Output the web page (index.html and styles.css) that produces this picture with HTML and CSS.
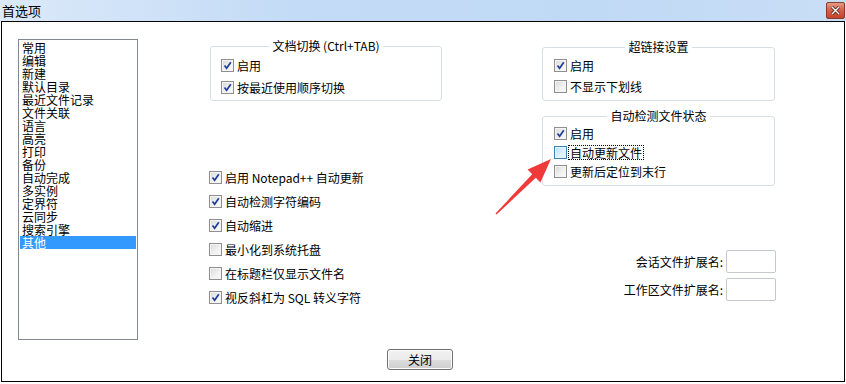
FILE: index.html
```
<!DOCTYPE html>
<html lang="zh-CN">
<head>
    <meta charset="UTF-8">
    <title>首选项</title>
    <link rel="stylesheet" href="styles.css">
</head>
<body>
    <div class="titlebar">
        <span class="title">首选项</span>
        <span class="close">
            <svg width="11" height="9" viewBox="0 0 11 9"><path d="M2 1 L9 8 M9 1 L2 8" stroke="#5a2016" stroke-width="3"/><path d="M2 1 L9 8 M9 1 L2 8" stroke="#fff" stroke-width="1.4"/></svg>
        </span>
    </div>
    <div class="window">
        <div class="panes">
            <ul class="list">
                <li>常用</li>
                <li>编辑</li>
                <li>新建</li>
                <li>默认目录</li>
                <li>最近文件记录</li>
                <li>文件关联</li>
                <li>语言</li>
                <li>高亮</li>
                <li>打印</li>
                <li>备份</li>
                <li>自动完成</li>
                <li>多实例</li>
                <li>定界符</li>
                <li>云同步</li>
                <li>搜索引擎</li>
                <li class="sel">其他</li>
            </ul>

            <div class="mid">
                <fieldset class="group g-doc">
                    <legend>文档切换 (Ctrl+TAB)</legend>
                    <label class="cbrow"><span class="cb on"></span>启用</label>
                    <label class="cbrow"><span class="cb on"></span>按最近使用顺序切换</label>
                </fieldset>
                <div class="opts">
                    <label class="cbrow"><span class="cb on"></span>启用 Notepad++ 自动更新</label>
                    <label class="cbrow"><span class="cb on"></span>自动检测字符编码</label>
                    <label class="cbrow"><span class="cb on"></span>自动缩进</label>
                    <label class="cbrow"><span class="cb"></span>最小化到系统托盘</label>
                    <label class="cbrow"><span class="cb"></span>在标题栏仅显示文件名</label>
                    <label class="cbrow"><span class="cb on"></span>视反斜杠为 SQL 转义字符</label>
                </div>
            </div>

            <div class="right">
                <fieldset class="group g-link">
                    <legend>超链接设置</legend>
                    <label class="cbrow"><span class="cb on"></span>启用</label>
                    <label class="cbrow"><span class="cb"></span>不显示下划线</label>
                </fieldset>
                <fieldset class="group g-watch">
                    <legend>自动检测文件状态</legend>
                    <label class="cbrow"><span class="cb on"></span>启用</label>
                    <label class="cbrow"><span class="cb hot"></span><span class="focus">自动更新文件</span></label>
                    <label class="cbrow"><span class="cb"></span>更新后定位到末行</label>
                </fieldset>
                <div class="exts">
                    <div class="ext"><span>会话文件扩展名:</span><span class="field"></span></div>
                    <div class="ext"><span>工作区文件扩展名:</span><span class="field"></span></div>
                </div>
            </div>
        </div>

        <div class="actions">
            <button class="btn">关闭</button>
        </div>

        <svg class="arrow" width="846" height="384" viewBox="0 0 846 384">
            <polygon points="495.5,213.5 532.2,174.2 527.6,169.6 551,159 540.4,182.4 535.8,177.8 496.5,214.5" fill="#f03a3a"/>
        </svg>
    </div>
</body>
</html>
```

FILE: styles.css
```
body {
    margin: 0;
    font-family: "Noto Sans CJK SC", "Liberation Sans", sans-serif;
    font-size: 12px;
    color: #000;
    background: #fff;
    width: 846px;
    height: 384px;
    overflow: hidden;
}
.titlebar {
    height: 21px;
    display: flex;
    align-items: center;
    justify-content: space-between;
    background: linear-gradient(90deg, #dbe9f9 0%, #c3dbf6 35%, #c0d9f5 70%, #c9def6 100%);
}
.title {
    font-size: 13px;
    padding-left: 2px;
    line-height: 16px;
}
.close {
    width: 19px;
    height: 17px;
    margin-right: 1px;
    box-sizing: border-box;
    border: 1px solid #8c3a2c;
    border-radius: 2px;
    background: linear-gradient(180deg, #e89a86 0%, #d4634b 45%, #c2442c 100%);
    display: flex;
    align-items: center;
    justify-content: center;
}
.window {
    position: relative;
    margin: 0 1px;
    height: 361px;
    box-sizing: border-box;
    border: 1px solid #000;
}
.panes {
    display: flex;
    align-items: flex-start;
    padding: 17px 0 0 16px;
}
.list {
    list-style: none;
    margin: 0;
    padding: 1px 1px;
    width: 120px;
    height: 301px;
    box-sizing: border-box;
    border: 1px solid #828790;
}
.list li {
    height: 13px;
    line-height: 13px;
    padding-left: 2px;
    font-size: 12px;
    white-space: nowrap;
}
.list li:first-child {
    margin-top: 0;
}
.list li.sel {
    background: #3399ff;
    color: #fff;
}
.mid {
    margin-left: 72px;
    width: 232px;
}
.right {
    margin-left: 100px;
    width: 234px;
}
.group {
    margin: 0;
    border: 1px solid #d5dfe5;
    border-radius: 3px;
    display: flex;
    flex-direction: column;
    min-width: 0;
}
.group legend {
    margin: 0 auto;
    padding: 0 3px;
    line-height: 14px;
    font-size: 12px;
}
.g-doc {
    padding: 6px 10px 6px 10px;
    gap: 9px;
    width: 232px;
    box-sizing: border-box;
}
.g-link {
    margin-top: 1px;
    padding: 5px 11px 7px 11px;
    gap: 8px;
    width: 233px;
    box-sizing: border-box;
}
.g-watch {
    margin-top: 8px;
    padding: 4px 11px 7px 11px;
    gap: 6px;
    width: 233px;
    box-sizing: border-box;
}
.cbrow {
    display: flex;
    align-items: center;
    height: 13px;
    line-height: 13px;
    white-space: nowrap;
}
.cb {
    width: 13px;
    height: 13px;
    box-sizing: border-box;
    margin-right: 3px;
    border: 1px solid #8f8f8f;
    background: linear-gradient(135deg, #d8d8d8 0%, #f2f2f2 60%, #fbfbfb 100%);
    box-shadow: inset 0 0 0 1px #f4f4f4;
    flex: none;
}
.cb.on {
    background-image: url("data:image/svg+xml;utf8,<svg xmlns='http://www.w3.org/2000/svg' width='11' height='11'><path d='M2.5 5.5 L4.6 8.2 L8.8 2.2' fill='none' stroke='%23203f96' stroke-width='1.7'/></svg>"), linear-gradient(135deg, #d8d8d8 0%, #f2f2f2 60%, #fbfbfb 100%);
}
.cb.hot {
    border-color: #3c7fb1;
    background: linear-gradient(135deg, #b9e0f8 0%, #dff1fd 60%, #f1f9fe 100%);
    box-shadow: inset 0 0 0 1px #e7f4fc;
}
.focus {
    outline: 1px dotted #000;
    line-height: 13px;
    padding: 0 1px;
    margin-left: -1px;
}
.opts {
    margin-top: 70px;
    margin-left: -1px;
    display: flex;
    flex-direction: column;
    gap: 11px;
}
.exts {
    margin-top: 64px;
    display: flex;
    flex-direction: column;
    gap: 5px;
}
.ext {
    display: flex;
    justify-content: flex-end;
    align-items: center;
    gap: 3px;
}
.field {
    width: 50px;
    height: 23px;
    box-sizing: border-box;
    border: 1px solid #c5c9cf;
    border-radius: 2px;
    background: #fff;
}
.actions {
    padding: 9px 0 0 385px;
}
.btn {
    width: 66px;
    height: 21px;
    font-family: "Noto Sans CJK SC", sans-serif;
    font-size: 12px;
    line-height: 17px;
    padding: 0;
    border: 1px solid #707070;
    border-radius: 3px;
    background: linear-gradient(180deg, #f2f2f2 0%, #ebebeb 50%, #dddddd 51%, #cfcfcf 100%);
    box-shadow: inset 0 0 0 1px #fcfcfc;
    color: #000;
}
.arrow {
    position: absolute;
    left: -2px;
    top: -22px;
    pointer-events: none;
}
```
